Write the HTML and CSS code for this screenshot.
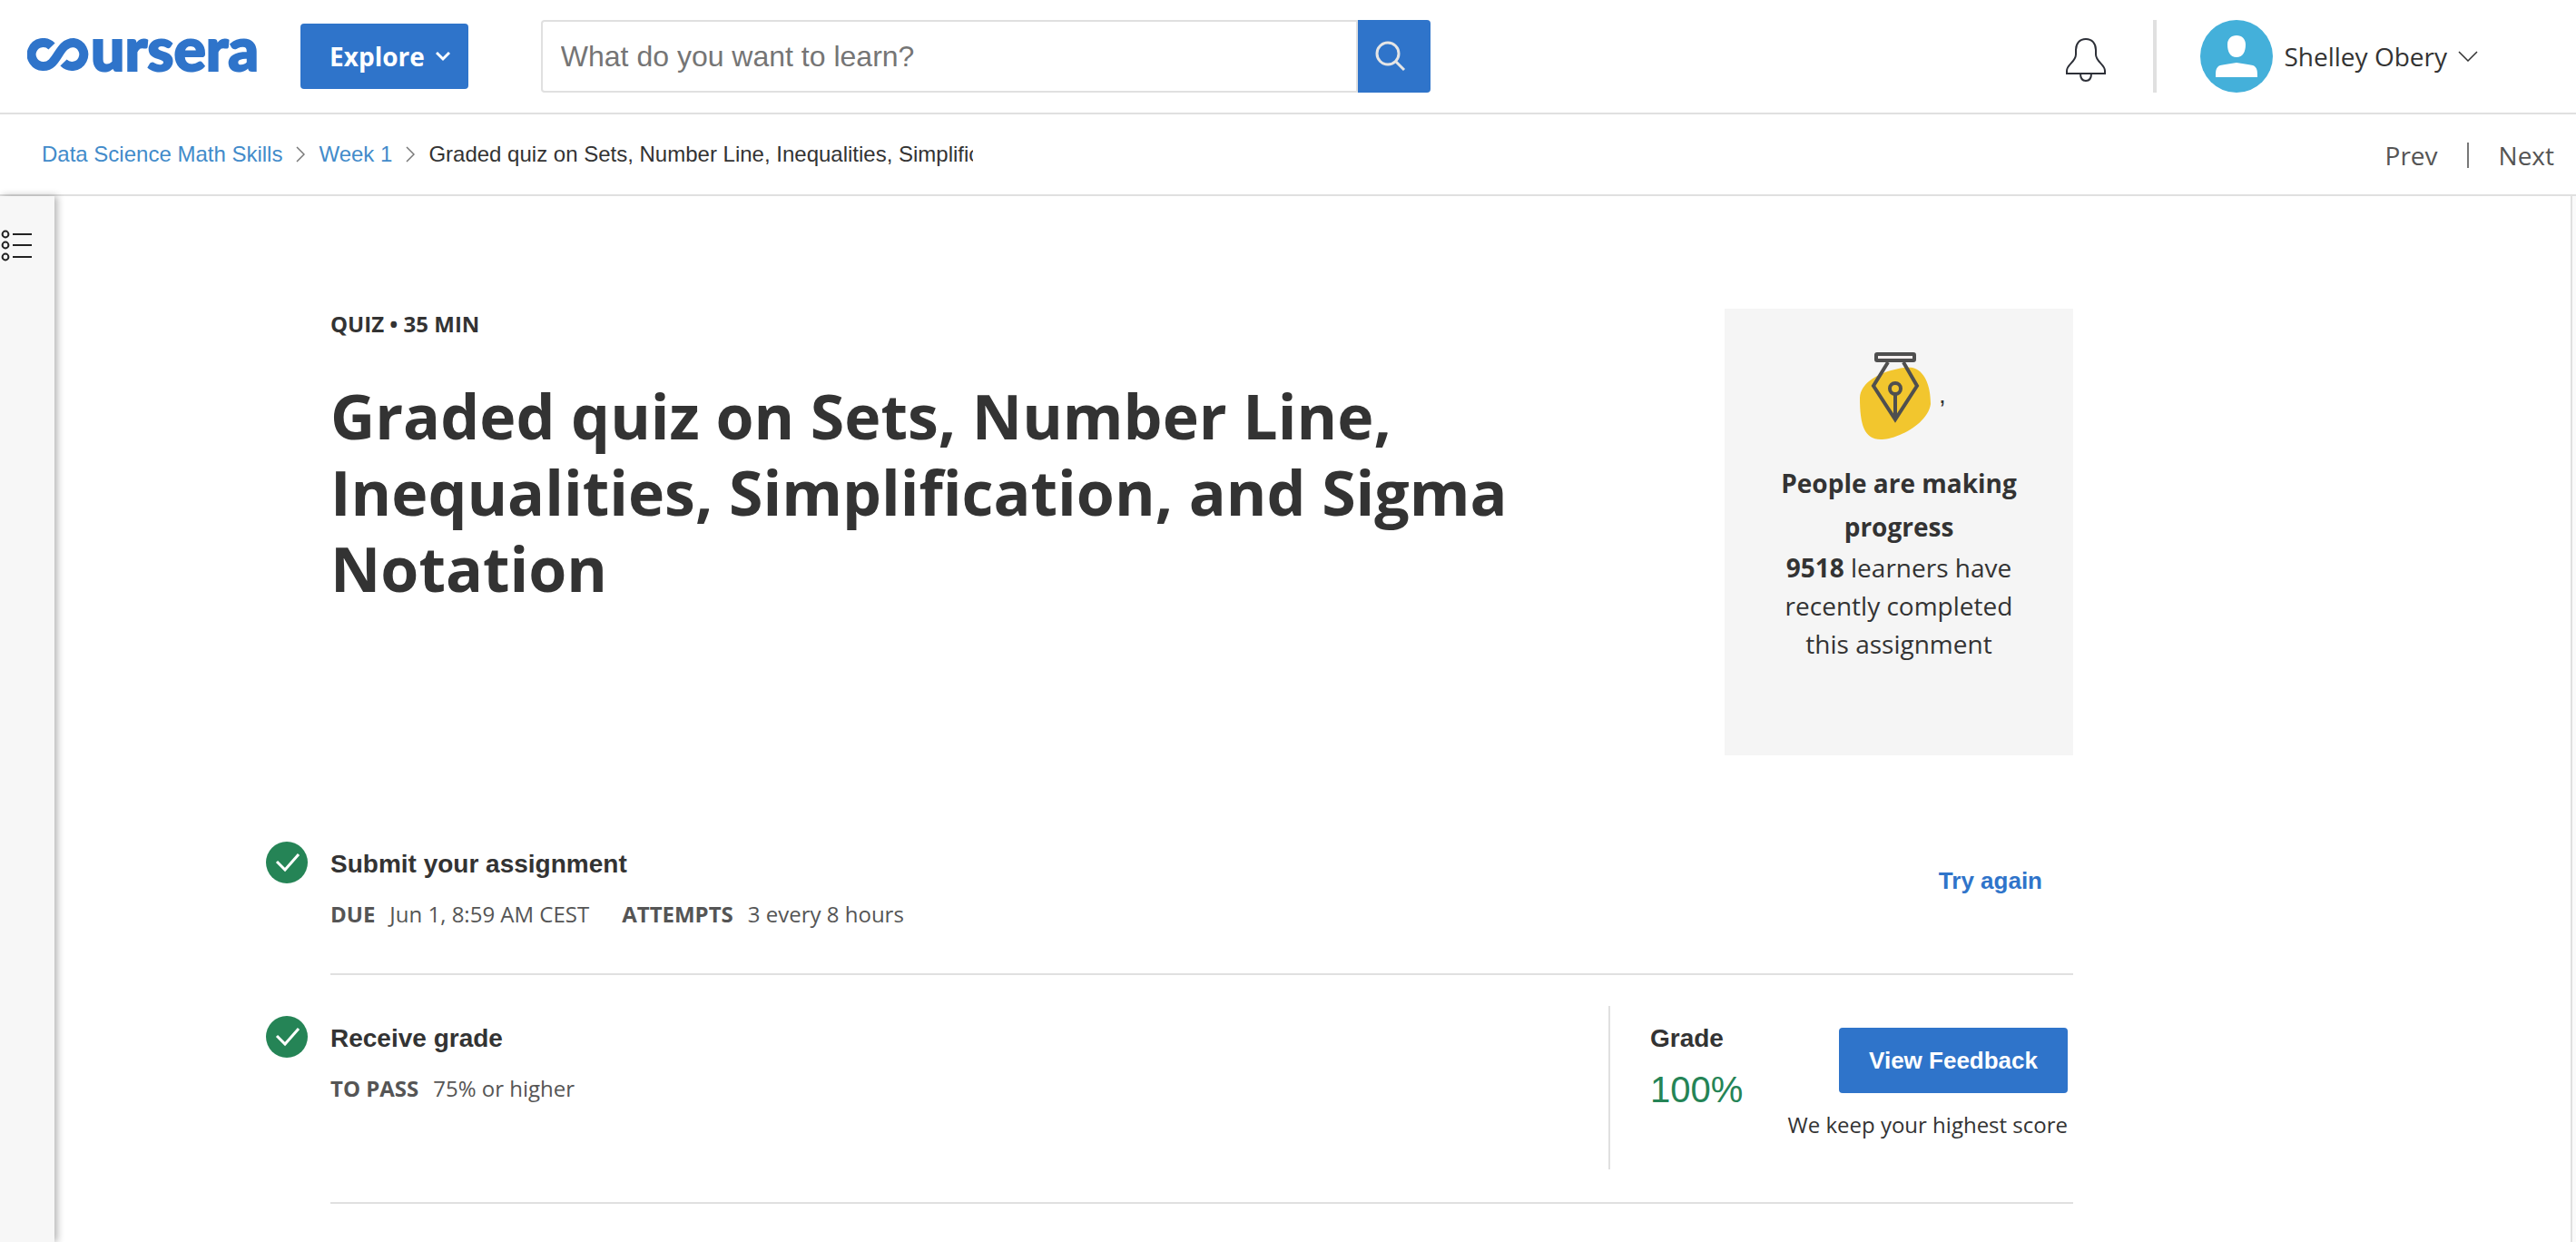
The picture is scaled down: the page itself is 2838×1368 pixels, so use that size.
FILE: index.html
```html
<!DOCTYPE html>
<html lang="en">
<head>
<meta charset="utf-8">
<meta name="viewport" content="width=device-width, initial-scale=1">
<title>Graded quiz on Sets, Number Line, Inequalities, Simplification, and Sigma Notation | Coursera</title>
<link rel="stylesheet" href="styles.css">
</head>
<body>
<header class="topbar">
  <a class="logo" href="#" aria-label="Coursera home">
    <svg class="logo-mark" viewBox="0 0 70 36" aria-hidden="true"><path d="M27 9A13 13 0 1 0 18 31C34 31 34 5 51 5A13 13 0 1 1 40 27"/></svg>
    <span class="logo-word">ursera</span>
  </a>
  <button class="button explore" type="button">Explore
    <svg class="explore-chevron" viewBox="0 0 16 12" aria-hidden="true"><path d="M1 2l7 7 7-7"/></svg>
  </button>
  <form class="search" role="search">
    <input class="search-input" type="text" aria-label="Search" placeholder="What do you want to learn?">
    <button class="search-button" type="submit" aria-label="Submit search">
      <svg viewBox="0 0 34 34" aria-hidden="true"><circle cx="14" cy="14" r="12"/><path d="M23 23l9 9"/></svg>
    </button>
  </form>
  <div class="account">
    <button class="bell" type="button" aria-label="Notifications">
      <svg viewBox="0 0 44 48" aria-hidden="true"><path d="M1 39v-3c0-7 10-10 10-18v-5C11 6 15 1 22 1s11 5 11 12v5c0 8 10 11 10 18v3zM16 39c0 5 2 8 6 8s6-3 6-8"/></svg>
    </button>
    <button class="profile" type="button">
      <svg class="avatar" viewBox="0 0 80 80" aria-hidden="true"><circle cx="40" cy="40" r="40"/><path d="M40 17c6 0 10 4 10 10 0 8-3 14-10 14s-10-6-10-14c0-6 4-10 10-10zM17 63c0-7 0-11 5-13 5-1 12-2 18-3 6 1 13 2 18 3 5 2 5 6 5 13z"/></svg>
      <span>Shelley Obery</span>
      <svg class="profile-chevron" viewBox="0 0 22 12" aria-hidden="true"><path d="M1 1l10 10L21 1"/></svg>
    </button>
  </div>
</header>

<div class="coursebar">
  <nav class="breadcrumbs" aria-label="Breadcrumb">
    <a href="#">Data Science Math Skills</a>
    <svg viewBox="0 0 10 18" aria-hidden="true"><path d="M1 1l8 8-8 8"/></svg>
    <a href="#">Week 1</a>
    <svg viewBox="0 0 10 18" aria-hidden="true"><path d="M1 1l8 8-8 8"/></svg>
    <span class="current">Graded quiz on Sets, Number Line, Inequalities, Simplification, and Sigma Notation</span>
  </nav>
  <nav class="pager" aria-label="Items">
    <a href="#">Prev</a>
    <a href="#">Next</a>
  </nav>
</div>

<div class="layout">
  <aside class="rail">
    <button class="outline-toggle" type="button" aria-label="Course outline">
      <svg viewBox="0 0 36 36" aria-hidden="true"><circle cx="6" cy="6" r="3.4"/><circle cx="6" cy="18" r="3.4"/><circle cx="6" cy="31" r="3.4"/><path d="M14 6h21M14 18h21M14 31h21"/></svg>
    </button>
  </aside>

  <main class="page">
    <section class="intro">
      <div class="intro-text">
        <p class="kicker">QUIZ • 35 MIN</p>
        <h1>Graded quiz on Sets, Number Line, Inequalities, Simplification, and Sigma Notation</h1>
      </div>
      <div class="progress-card">
        <div class="pen">
          <svg viewBox="-2 0 96 98" aria-hidden="true">
            <path class="pen-blob" d="M7 50C8 34 26 25 38 21 50 17 60 16 65 17 78 20 85 36 85 57 83 72 66 85 51 91 42 95 35 96 30 96 12 96 7 80 7 50z"/>
            <path class="pen-line" d="M38 11L22 37l24 37 24-37-15-26M46 46v26"/>
            <circle class="pen-line" cx="46" cy="40" r="6"/>
            <rect class="pen-line pen-cap" x="25" y="2" width="42" height="7" rx="1"/>
          </svg>
          <span>,</span>
        </div>
        <h2>People are making progress</h2>
        <p><strong>9518</strong> learners have recently completed this assignment</p>
      </div>
    </section>

    <ul class="steps">
      <li class="step">
        <svg class="check" viewBox="0 0 46 46" aria-hidden="true"><circle cx="23" cy="23" r="23"/><path d="M12 22l9 9 15-17"/></svg>
        <div class="step-body">
          <div class="step-text">
            <h3>Submit your assignment</h3>
            <dl class="facts">
              <div><dt>DUE</dt><dd>Jun 1, 8:59 AM CEST</dd></div>
              <div><dt>ATTEMPTS</dt><dd>3 every 8 hours</dd></div>
            </dl>
          </div>
          <button class="try-again" type="button">Try again</button>
        </div>
      </li>
      <li class="step">
        <svg class="check" viewBox="0 0 46 46" aria-hidden="true"><circle cx="23" cy="23" r="23"/><path d="M12 22l9 9 15-17"/></svg>
        <div class="step-body graded">
          <div class="step-text">
            <h3>Receive grade</h3>
            <dl class="facts">
              <div><dt>TO PASS</dt><dd>75% or higher</dd></div>
            </dl>
          </div>
          <div class="grade">
            <div class="grade-score">
              <h3>Grade</h3>
              <p class="score">100%</p>
            </div>
            <div class="grade-action">
              <button class="button feedback" type="button">View Feedback</button>
              <p>We keep your highest score</p>
            </div>
          </div>
        </div>
      </li>
    </ul>
  </main>
  <div class="edge"></div>
</div>
</body>
</html>
```

FILE: styles.css
```css
:root {
  --blue: #2f74ca;
  --link: #428bca;
  --green: #258456;
  --ink: #333;
  --muted: #555;
  --line: #e0e0e0;
  --open: "Open Sans", "Noto Sans", sans-serif;
  --helv: "Liberation Sans", Arial, sans-serif;
}

* { box-sizing: border-box; }

body {
  margin: 0;
  min-height: 100vh;
  display: flex;
  flex-direction: column;
  background: #fff;
  color: var(--ink);
  font: 24px/34px var(--open);
}

h1, h2, h3, p, ul, dl, dd { margin: 0; padding: 0; }
a { text-decoration: none; }
svg { display: block; flex: none; fill: none; }

button {
  border: 0;
  padding: 0;
  background: none;
  color: inherit;
  font: inherit;
  cursor: pointer;
}

.button {
  height: 72px;
  border-radius: 4px;
  background: var(--blue);
  color: #fff;
  font-weight: 700;
}

/* Top bar */
.topbar {
  display: flex;
  align-items: center;
  padding: 22px 108px 22px 30px;
  border-bottom: 2px solid var(--line);
}

.logo {
  display: flex;
  align-items: center;
  margin-right: 46px;
  padding-bottom: 4px;
  color: var(--blue);
}
.logo-mark { width: 70px; height: 36px; stroke: currentColor; stroke-width: 10; }
.logo-word {
  padding-bottom: 14px;
  font: 900 66px/60px Lato, sans-serif;
  -webkit-text-stroke: 2px currentColor;
}

.explore {
  display: flex;
  align-items: center;
  gap: 12px;
  padding: 0 20px 0 32px;
  font-size: 28px;
}
.explore-chevron { width: 16px; height: 12px; stroke: #fff; stroke-width: 3; }

.search { display: flex; width: 980px; height: 80px; margin-left: 80px; }
.search-input {
  flex: 1;
  min-width: 0;
  border: 2px solid var(--line);
  border-radius: 4px 0 0 4px;
  padding: 0 20px;
  color: var(--ink);
  font: 32px/36px var(--helv);
}
.search-input::placeholder { color: #757575; opacity: 1; }
.search-button {
  display: grid;
  place-items: center;
  width: 80px;
  padding-right: 8px;
  border-radius: 0 4px 4px 0;
  background: var(--blue);
}
.search-button svg { width: 34px; height: 34px; stroke: #e5e5e5; stroke-width: 3; }

.account { display: flex; align-items: center; margin-left: auto; }
.bell svg { width: 44px; height: 48px; margin-top: 8px; stroke: #2d3038; stroke-width: 2; }
.bell { height: 80px; padding-right: 52px; border-right: 4px solid var(--line); }
.profile {
  display: flex;
  align-items: center;
  gap: 12px;
  margin-left: 48px;
  font-size: 28px;
}
.avatar { width: 80px; height: 80px; }
.avatar circle { fill: #44b0da; }
.avatar path { fill: #fff; }
.profile-chevron { width: 22px; height: 12px; stroke: #333; stroke-width: 1.5; }

/* Breadcrumb bar */
.coursebar {
  display: flex;
  align-items: center;
  justify-content: space-between;
  height: 90px;
  padding: 0 24px 0 46px;
  border-bottom: 2px solid var(--line);
}
.breadcrumbs {
  display: flex;
  align-items: center;
  gap: 15px;
  width: 1026px;
  font-family: var(--helv);
  white-space: nowrap;
}
.breadcrumbs a { color: var(--link); }
.breadcrumbs svg { width: 10px; height: 18px; stroke: #777; stroke-width: 1.5; }
.current { overflow: hidden; }

.pager { display: flex; align-items: center; padding-top: 2px; color: var(--muted); font-size: 28px; }
.pager a { color: inherit; line-height: 28px; }
.pager a + a { margin-left: 32px; padding-left: 33px; border-left: 2px solid #777; }

/* Main layout */
.layout { display: flex; flex: 1; }
.rail {
  flex: none;
  width: 60px;
  padding-top: 36px;
  background: #f7f7f7;
  box-shadow: 3px 0 8px rgba(0, 0, 0, .3);
}
.outline-toggle svg { width: 36px; height: 36px; stroke: #222; stroke-width: 2; }
.page { flex: 1; padding: 124px 0 40px 233px; }
.edge { flex: none; width: 6px; border-left: 2px solid var(--line); background: #fafafa; }

.intro {
  display: flex;
  justify-content: space-between;
  max-width: 1991px;
  padding-left: 71px;
}
.intro-text { max-width: 1340px; }
.kicker { font-weight: 700; }
h1 { margin-top: 42px; font-size: 68px; line-height: 84px; font-weight: 700; }

.progress-card {
  flex: none;
  width: 384px;
  padding: 48px 48px 102px;
  background: #f5f5f5;
  text-align: center;
  font-size: 28px;
  line-height: 42px;
}
.pen {
  display: flex;
  align-items: center;
  justify-content: center;
  margin-bottom: 22px;
  font-family: var(--helv);
}
.pen svg { width: 96px; height: 98px; }
.pen span { padding-bottom: 4px; }
.pen-blob { fill: #f2c62e; }
.pen-line { stroke: #4f4f4f; stroke-width: 4; }
.pen-cap { fill: #f5f0f0; }
.progress-card h2 { font-size: 28px; line-height: 48px; }

/* Assignment steps */
.steps { max-width: 1991px; margin-top: 50px; list-style: none; }
.step { display: flex; gap: 25px; }
.check { width: 46px; height: 46px; margin-top: 45px; }
.check circle { fill: var(--green); }
.check path { stroke: #fff; stroke-width: 3; }
.step-body {
  flex: 1;
  display: flex;
  justify-content: space-between;
  padding: 34px 0 48px;
  border-bottom: 2px solid var(--line);
}
.graded { padding-bottom: 36px; }
.step-text { padding-top: 18px; }
h3 { font: 700 28px/36px var(--helv); }
.facts { display: flex; gap: 36px; margin-top: 20px; color: var(--muted); }
.facts div { display: flex; gap: 16px; }
dt { font-weight: 700; }
.try-again { padding-right: 34px; color: var(--blue); font: 700 26px/36px var(--helv); }

.grade {
  display: flex;
  justify-content: space-between;
  width: 512px;
  padding: 18px 6px 32px 44px;
  border-left: 2px solid var(--line);
}
.score { margin-top: 14px; color: var(--green); font: 40px/48px var(--helv); }
.grade-action { display: flex; flex-direction: column; align-items: flex-end; gap: 18px; padding-top: 6px; }
.feedback { padding: 0 33px; font: 700 26px/36px var(--helv); }
```
